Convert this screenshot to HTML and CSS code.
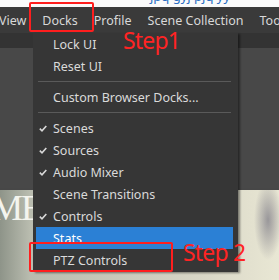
FILE: index.html
```html
<!DOCTYPE html>
<html lang="en">
<head>
    <meta charset="UTF-8">
    <title>Docks menu</title>
    <link rel="stylesheet" href="styles.css">
</head>
<body>
    <div class="title-strip"><span class="title-text">jpq gyj pjq yy</span></div>

    <nav class="menubar">
        <span class="menubar-item first">View</span>
        <span class="menubar-item">Docks</span>
        <span class="menubar-item">Profile</span>
        <span class="menubar-item">Scene Collection</span>
        <span class="menubar-item">Tools</span>
    </nav>

    <div class="toolbar"></div>
    <div class="panel"></div>
    <div class="preview">
        <span class="preview-text">ME</span>
    </div>

    <!-- dropdown for Docks -->
    <div class="menu">
        <div class="menu-item"><span class="check"></span>Lock UI</div>
        <div class="menu-item"><span class="check"></span>Reset UI</div>
        <div class="menu-sep"></div>
        <div class="menu-item"><span class="check"></span>Custom Browser Docks...</div>
        <div class="menu-sep"></div>
        <div class="menu-item"><span class="check"><svg width="8" height="7" viewBox="0 0 8 7"><path d="M0.8 3.6 L3 5.8 L7.3 1" fill="none" stroke="#d8d8d8" stroke-width="1.6"/></svg></span>Scenes</div>
        <div class="menu-item"><span class="check"><svg width="8" height="7" viewBox="0 0 8 7"><path d="M0.8 3.6 L3 5.8 L7.3 1" fill="none" stroke="#d8d8d8" stroke-width="1.6"/></svg></span>Sources</div>
        <div class="menu-item"><span class="check"><svg width="8" height="7" viewBox="0 0 8 7"><path d="M0.8 3.6 L3 5.8 L7.3 1" fill="none" stroke="#d8d8d8" stroke-width="1.6"/></svg></span>Audio Mixer</div>
        <div class="menu-item"><span class="check"></span>Scene Transitions</div>
        <div class="menu-item"><span class="check"><svg width="8" height="7" viewBox="0 0 8 7"><path d="M0.8 3.6 L3 5.8 L7.3 1" fill="none" stroke="#d8d8d8" stroke-width="1.6"/></svg></span>Controls</div>
        <div class="menu-item active"><span class="check"></span>Stats</div>
        <div class="menu-item"><span class="check"></span>PTZ Controls</div>
    </div>

    <!-- annotations -->
    <div class="mark mark-docks"></div>
    <div class="mark mark-ptz"></div>
    <span class="step step-1">Step1</span>
    <span class="step step-2">Step 2</span>
</body>
</html>
```

FILE: styles.css
```css
body {
    margin: 0;
    width: 279px;
    height: 280px;
    overflow: hidden;
    position: relative;
    font-family: 'Noto Sans', 'Open Sans', sans-serif;
    background-color: #474747;
}

.title-strip {
    height: 7px;
    background-color: #fafafa;
    overflow: hidden;
    position: relative;
}

.title-text {
    position: absolute;
    left: 150px;
    top: -13px;
    font-size: 13px;
    color: #2b6fc4;
}

.menubar {
    height: 26px;
    background-color: #3a3a3a;
    display: flex;
    align-items: center;
    white-space: nowrap;
    font-size: 12.5px;
    color: #d8d8d8;
}

.menubar-item {
    padding: 0 8px;
}

.menubar-item.first {
    margin-left: -9px;
}

.toolbar {
    height: 15px;
    background-color: #333333;
}

.panel {
    height: 140px;
    background-color: #484848;
}

.preview {
    height: 92px;
    background:
        radial-gradient(ellipse 14px 40px at 268px 30px, rgba(120, 118, 130, 0.7), transparent),
        linear-gradient(90deg, #8e9489 0px, #b9bcaf 30px, #d8d6c6 200px, #e9e7d4 279px);
}

.preview-text {
    display: block;
    margin-left: -9px;
    margin-top: 2px;
    font-family: 'Liberation Serif', serif;
    font-size: 36px;
    line-height: 36px;
    color: #f4f4ee;
    letter-spacing: -2px;
}

.menu {
    position: absolute;
    left: 33px;
    top: 33px;
    width: 205px;
    padding-bottom: 1px;
    background-color: #363636;
    box-shadow: 2px 1px 2px rgba(0, 0, 0, 0.45);
    font-size: 12.5px;
    color: #dadada;
}

.menu-item {
    height: 22px;
    margin: 0 5px 0 3px;
    display: flex;
    align-items: center;
    padding-left: 3px;
}

.menu-item.active {
    background-color: #2b80d5;
    color: #ffffff;
}

.check {
    width: 14px;
    display: flex;
    align-items: center;
}

.menu-sep {
    height: 1px;
    margin: 4px 7px 4px 5px;
    background-color: #5a5a5a;
}

.mark {
    position: absolute;
    border: 2px solid #ff1e1e;
    border-radius: 2px;
}

.mark-docks {
    left: 29px;
    top: 2px;
    width: 61px;
    height: 26px;
}

.mark-ptz {
    left: 29px;
    top: 242px;
    width: 140px;
    height: 26px;
}

.step {
    position: absolute;
    color: #ff2424;
    font-size: 23px;
    line-height: 23px;
    letter-spacing: -0.8px;
}

.step-1 {
    left: 123px;
    top: 29px;
}

.step-2 {
    left: 183px;
    top: 241px;
}
```
